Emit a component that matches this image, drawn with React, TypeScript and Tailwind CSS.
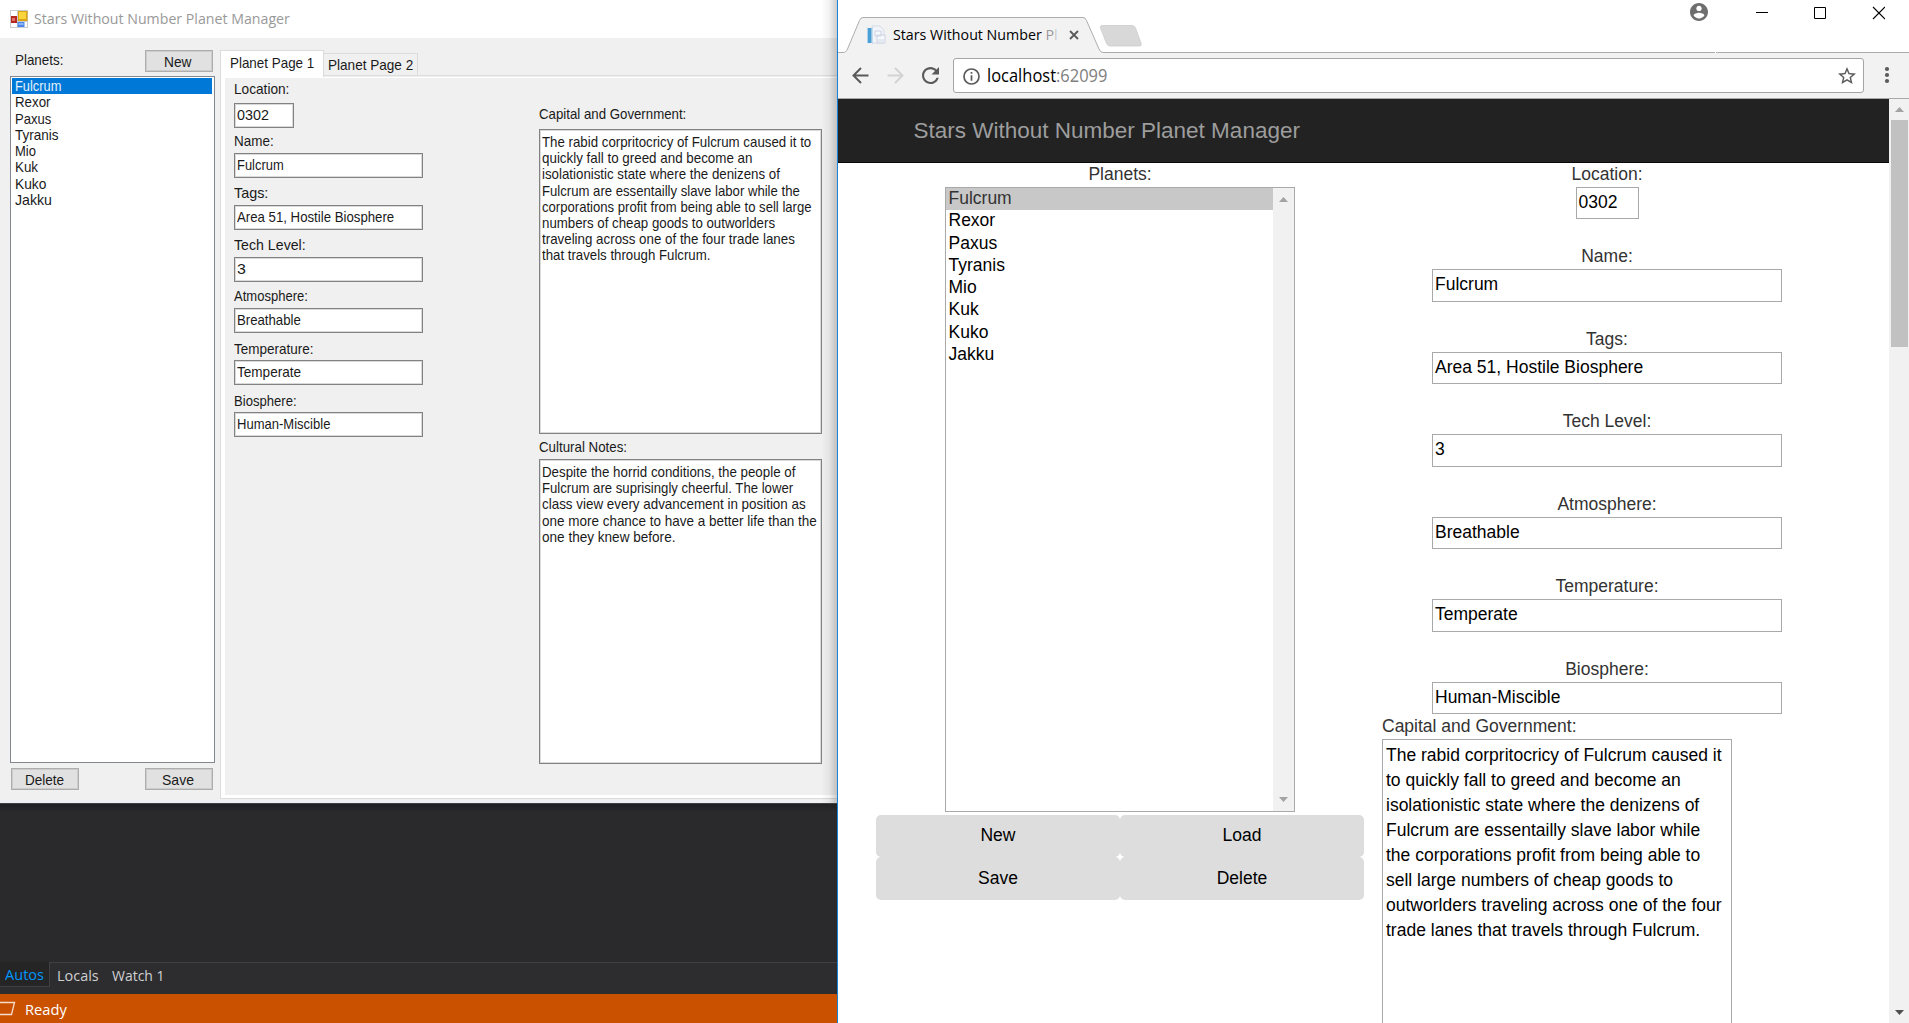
import React, { useLayoutEffect, useRef, useState } from "react";

type Line = [text: string, width: number];

/* Condenses or widens a line of text to a given width. */
function Fit({ w, children, className = "" }: { w: number; children: React.ReactNode; className?: string }) {
  const ref = useRef<HTMLSpanElement>(null);
  const [scale, setScale] = useState(1);
  useLayoutEffect(() => {
    if (ref.current) setScale((w + 1.5) / ref.current.offsetWidth);
  }, [w]);
  return (
    <span className={"inline-block whitespace-nowrap " + className} style={{ width: w + 1.5 }}>
      <span ref={ref} className="inline-block origin-left" style={{ transform: `scaleX(${scale})` }}>
        {children}
      </span>
    </span>
  );
}

const planets: Line[] = [
  ["Fulcrum", 44.7],
  ["Rexor", 34],
  ["Paxus", 35],
  ["Tyranis", 41.7],
  ["Mio", 19.3],
  ["Kuk", 21.7],
  ["Kuko", 29.7],
  ["Jakku", 35.3],
];

const desktopFields = [
  { label: ["Location:", 54], value: ["0302", 30], row: "pt-[4px]", w: "w-[60px]", lead: "leading-[13px]" },
  { label: ["Name:", 38], value: ["Fulcrum", 45], row: "pt-[4px]", w: "w-[189px]", lead: "leading-[18px]" },
  { label: ["Tags:", 33], value: ["Area 51, Hostile Biosphere", 155.3], row: "pt-[6px]", w: "w-[189px]", lead: "leading-[18px]" },
  { label: ["Tech Level:", 70.3], value: ["3", 7], row: "pt-[6px]", w: "w-[189px]", lead: "leading-[18px]" },
  { label: ["Atmosphere:", 72.3], value: ["Breathable", 62.7], row: "pt-[5px]", w: "w-[189px]", lead: "leading-[18px]" },
  { label: ["Temperature:", 77.7], value: ["Temperate", 62.7], row: "pt-[6px]", w: "w-[189px]", lead: "leading-[19px]" },
  { label: ["Biosphere:", 61.3], value: ["Human-Miscible", 92.3], row: "pt-[6px]", w: "w-[189px]", lead: "leading-[19px]" },
] as { label: Line; value: Line; row: string; w: string; lead: string }[];

const capitalLines: Line[] = [
  ["The rabid corpritocricy of Fulcrum caused it to", 267.5],
  ["quickly fall to greed and become an", 209],
  ["isolationistic state where the denizens of", 236],
  ["Fulcrum are essentailly slave labor while the", 256],
  ["corporations profit from being able to sell large", 268.5],
  ["numbers of cheap goods to outworlders", 232],
  ["traveling across one of the four trade lanes", 251],
  ["that travels through Fulcrum.", 167],
];

const cultureLines: Line[] = [
  ["Despite the horrid conditions, the people of", 251.7],
  ["Fulcrum are suprisingly cheerful. The lower", 250],
  ["class view every advancement in position as", 262],
  ["one more chance to have a better life than the", 273.3],
  ["one they knew before.", 132.3],
];

const webFields = [
  { label: "Location:", value: "0302", w: "w-[63px]" },
  { label: "Name:", value: "Fulcrum", w: "w-[350px]" },
  { label: "Tags:", value: "Area 51, Hostile Biosphere", w: "w-[350px]" },
  { label: "Tech Level:", value: "3", w: "w-[350px]" },
  { label: "Atmosphere:", value: "Breathable", w: "w-[350px]" },
  { label: "Temperature:", value: "Temperate", w: "w-[350px]" },
  { label: "Biosphere:", value: "Human-Miscible", w: "w-[350px]" },
];

const webLines = [
  "The rabid corpritocricy of Fulcrum caused it",
  "to quickly fall to greed and become an",
  "isolationistic state where the denizens of",
  "Fulcrum are essentailly slave labor while",
  "the corporations profit from being able to",
  "sell large numbers of cheap goods to",
  "outworlders traveling across one of the four",
  "trade lanes that travels through Fulcrum.",
];

function FormIcon() {
  return (
    <svg width="18" height="18" viewBox="0 0 18 18" className="shrink-0">
      <rect width="18" height="18" fill="#c9cbcf" />
      <rect x="1" y="1" width="6" height="5" fill="#fff" />
      <rect x="1" y="13" width="6" height="4" fill="#fff" />
      <rect x="14" y="12" width="3" height="5" fill="#fff" />
      <rect x="1" y="6" width="6" height="7" fill="#b5281f" />
      <rect x="2" y="8" width="3" height="3" fill="#e4716b" />
      <rect x="8" y="1" width="9.5" height="10" fill="#d9a514" />
      <rect x="9" y="2" width="7" height="7" fill="#fbd53b" />
      <rect x="7.5" y="12" width="7" height="5" fill="#4b86e8" />
      <rect x="8.5" y="13" width="5" height="2" fill="#8db4f5" />
    </svg>
  );
}

function WinButton({ text, w }: { text: string; w: number }) {
  return (
    <button className="h-[22px] w-[68px] border border-[#adadad] bg-[#e1e1e1] pr-[2px] text-center leading-[21px] outline outline-1 -outline-offset-2 outline-[#adadad]/40">
      <Fit w={w} className="text-left">{text}</Fit>
    </button>
  );
}

function LinesBox({ lines }: { lines: Line[] }) {
  return (
    <div className="h-[305px] w-[283px] border border-[#828282] bg-white pl-[1.5px] pt-[4px] leading-[16.25px] outline outline-1 -outline-offset-2 outline-[#828282]/30">
      {lines.map(([l, w]) => (
        <div key={l} className="h-[16.2px]"><Fit w={w}>{l}</Fit></div>
      ))}
    </div>
  );
}

function DesktopApp() {
  return (
    <section className="relative flex h-[803px] flex-col bg-[#f0f0f0] font-['Liberation_Sans',sans-serif] text-[15px] text-[#1a1a1a]">
      <div className="flex h-[38px] shrink-0 items-center bg-white pl-[10px]">
        <FormIcon />
        <Fit w={254.5} className="-mt-[2px] ml-[5.5px] font-['Open_Sans',sans-serif] text-[15px] text-[#999]">
          Stars Without Number Planet Manager
        </Fit>
      </div>
      <div className="flex">
        <div className="w-[220px] shrink-0 pl-[10px]">
          <div className="flex h-[38px] pt-[12px]">
            <span className="w-[135px] pl-[5px] leading-[20px]"><Fit w={46.7}>Planets:</Fit></span>
            <WinButton text="New" w={26} />
          </div>
          <div className="h-[687px] w-[205px] border border-[#828790] bg-white p-px">
            {planets.map(([p, w], i) => (
              <div
                key={p}
                className={
                  "mr-px h-[16.25px] whitespace-nowrap pl-[3px] leading-[16.8px] " +
                  (i === 0 ? "bg-[#0078d7] text-white/90" : "")
                }
              >
                <Fit w={w}>{p}</Fit>
              </div>
            ))}
          </div>
          <div className="flex w-[203px] justify-between pl-px pt-[5px]">
            <WinButton text="Delete" w={37.3} />
            <WinButton text="Save" w={30.3} />
          </div>
        </div>
        <div className="flex w-[617px] flex-col pt-[12px]">
          <div className="flex h-[27px] items-end">
            <div className="z-10 h-[27px] w-[104px] border border-b-0 border-[#dcdcdc] bg-white pl-[9px] leading-[23px]">
              <Fit w={82.5}>Planet Page 1</Fit>
            </div>
            <div className="mb-px h-[23px] w-[94px] border border-l-0 border-[#dcdcdc] pl-[4px] leading-[21px]">
              <Fit w={83.5}>Planet Page 2</Fit>
            </div>
            <div className="mb-px h-px flex-1 bg-[#dcdcdc]" />
          </div>
          <div className="flex h-[722px] border-b border-l border-[#dcdcdc]">
            <div className="flex flex-1 border-b-[3px] border-l-[4px] border-t border-white">
              <div className="w-[314px] shrink-0 pl-[9px]">
                {desktopFields.map((f) => (
                  <div key={f.label[0]} className={f.row}>
                    <div className={"h-[21px] " + f.lead}><Fit w={f.label[1]}>{f.label[0]}</Fit></div>
                    <div className={"h-[25px] border border-[#828282] bg-white pl-[2px] leading-[22.5px] outline outline-1 -outline-offset-2 outline-[#828282]/30 " + f.w}>
                      <Fit w={f.value[1]}>{f.value[0]}</Fit>
                    </div>
                  </div>
                ))}
              </div>
              <div className="w-[290px] pt-[25px]">
                <div className="h-[26px] leading-[22px]"><Fit w={146}>Capital and Government:</Fit></div>
                <LinesBox lines={capitalLines} />
                <div className="h-[25px] leading-[25px]"><Fit w={86.3}>Cultural Notes:</Fit></div>
                <LinesBox lines={cultureLines} />
              </div>
            </div>
          </div>
        </div>
      </div>
      <div className="absolute inset-y-0 right-0 z-20 w-[16px] bg-gradient-to-r from-transparent via-black/5 to-black/20" />
    </section>
  );
}

function DebuggerStrip() {
  return (
    <section className="flex flex-1 flex-col bg-[#2a2a2c] font-['Open_Sans',sans-serif] text-[14.5px]">
      <div className="h-[159px] border-t border-[#3f3f46] bg-gradient-to-b from-[#202021] to-[#2a2a2c] to-[8px]" />
      <div className="flex h-[32px] bg-[#2d2d30] text-[#d0d0d0]">
        <div className="h-[25px] w-[50px] border-b border-r border-[#3f3f46] bg-[#252526] pl-[5px] leading-[25px] text-[#0097fb]">
          <Fit w={37.7}>Autos</Fit>
        </div>
        <div className="flex flex-1 border-t border-[#3f3f46] pl-[6.5px] leading-[25px]">
          <Fit w={40.3} className="mr-[14px]">Locals</Fit>
          <Fit w={51.5}>Watch 1</Fit>
        </div>
      </div>
      <div className="flex h-[29px] items-center bg-[#ca5100] text-white">
        <svg width="16" height="15" viewBox="0 0 16 15" className="mr-[9px]">
          <path d="M0 1.5H14.5L11.5 13.5H0" fill="none" stroke="#f5dccb" strokeWidth="1.3" />
        </svg>
        <Fit w={40} className="mt-px leading-[31px]">Ready</Fit>
      </div>
    </section>
  );
}

function TabStrip() {
  return (
    <div className="relative flex h-[53px] bg-white">
      <svg width="1071" height="53" viewBox="0 0 1071 53" className="absolute inset-0">
        <path d="M0 52.5H5C7.5 52.5 8.5 51 9.5 49L21.5 20.5Q22.5 17.5 25 17.5H245Q247.5 17.5 248.5 20.5L261 49Q262.5 52.5 265 52.5V54H0Z" fill="#f2f2f2" />
        <path d="M0 52.5H5C7.5 52.5 8.5 51 9.5 49L21.5 20.5Q22.5 17.5 25 17.5H245Q247.5 17.5 248.5 20.5L261 49Q262.5 52.5 265 52.5H877M878 52.5H1071" fill="none" stroke="#adadad" />
        <path d="M264 25.5H294Q296.5 25.5 297.5 28L303 43Q304 46 301.5 46H272Q269.5 46 268.5 43.5L262.5 28Q262 25.5 264 25.5Z" fill="#d8d8d8" stroke="#cdcdcd" strokeWidth=".8" />
      </svg>
      <div className="relative mt-[25px] flex h-[20px] items-center pl-[29px]">
        <svg width="19" height="20" viewBox="0 0 19 20">
          <path d="M5 1H13L17 5V18H5Z" fill="#f1f4f9" stroke="#d5dbe5" />
          <rect x="0.5" y="3" width="4" height="15" fill="#4a9fd6" />
          <path d="M0 2V19M5.5 2V19" stroke="#c5dbee" />
          <path d="M8 6H14V11H8ZM10 10H18V18H10Z" fill="#f7f9fc" stroke="#cbd2e2" />
          <path d="M11 14H17V17H11Z" fill="#e4e8f1" />
        </svg>
        <Fit w={163.5} className="-mt-[2px] ml-[7px] font-['Open_Sans',sans-serif] text-[15px] leading-[20px] text-black">
          Stars Without Number <span className="text-black/40">P</span><span className="text-black/20">l</span>
        </Fit>
        <svg width="10" height="10" viewBox="0 0 10 10" className="ml-[11px]">
          <path d="M1 1L9 9M9 1L1 9" stroke="#5a5a5a" strokeWidth="1.8" />
        </svg>
      </div>
      <div className="relative ml-auto mr-[24px] flex h-[24px] items-center">
        <svg width="18" height="18" viewBox="2 2 20 20" className="mr-[48px]">
          <path fill="#6e6e6e" d="M12 2C6.480 2 2 6.480 2 12s4.480 10 10 10 10-4.480 10-10S17.520 2 12 2zm0 3c1.660 0 3 1.340 3 3s-1.340 3-3 3-3-1.340-3-3 1.340-3 3-3zm0 14.200c-2.500 0-4.710-1.280-6-3.220.030-1.990 4-3.080 6-3.080 1.990 0 5.970 1.090 6 3.080-1.290 1.940-3.500 3.220-6 3.220z" />
        </svg>
        <svg width="129" height="14" viewBox="0 0 129 14" className="mt-[2px]">
          <path d="M0 6.5H12M58.5 1.5H69.5V12.5H58.5Z" fill="none" stroke="#000" />
          <path d="M117 1L129 13M129 1L117 13" stroke="#000" strokeWidth="1.1" />
        </svg>
      </div>
    </div>
  );
}

function Toolbar() {
  return (
    <div className="flex h-[46px] border-b border-[#a9a9a9] bg-[#f2f2f2]">
      <div className="flex h-[44px] w-[115px] items-center pl-[14px]">
        <svg width="17" height="17" viewBox="0 0 17 17">
          <path d="M16.5 8.5H2M9 1L1.5 8.5L9 16" fill="none" stroke="#5a5a5a" strokeWidth="2" />
        </svg>
        <svg width="17" height="17" viewBox="0 0 17 17" className="ml-[18px]">
          <path d="M0.5 8.5H15M8 1L15.5 8.5L8 16" fill="none" stroke="#d3d3d3" strokeWidth="2" />
        </svg>
        <svg width="17" height="17" viewBox="4 4 16 16" className="ml-[18px]">
          <path fill="#5a5a5a" d="M17.650 6.350C16.200 4.900 14.210 4 12 4c-4.420 0-7.990 3.580-7.990 8s3.570 8 7.990 8c3.730 0 6.840-2.550 7.730-6h-2.080c-.820 2.330-3.040 4-5.650 4-3.310 0-6-2.690-6-6s2.690-6 6-6c1.660 0 3.140.690 4.220 1.780L13 11h7V4l-2.350 2.350z" />
        </svg>
      </div>
      <div className="mt-[5px] flex h-[35px] w-[911px] items-center rounded-[3px] border border-[#a5a5a5] bg-white pl-[9px] pr-[7px]">
        <svg width="17" height="17" viewBox="0 0 17 17" className="mt-[2px]">
          <circle cx="8.5" cy="8.5" r="7.5" fill="none" stroke="#5a5a5a" strokeWidth="1.7" />
          <path d="M8.5 4V5.8M8.5 7.3V12.7" stroke="#5a5a5a" strokeWidth="1.7" />
        </svg>
        <Fit w={119} className="ml-[6.5px] font-['Open_Sans',sans-serif] text-[17.5px] leading-[33px] text-black">
          localhost<span className="text-[#808080]">:62099</span>
        </Fit>
        <svg width="18" height="18" viewBox="2 2 20 20" className="ml-auto mt-[1px]">
          <path fill="#5a5a5a" d="M22 9.240l-7.190-.620L12 2 9.190 8.630 2 9.240l5.460 4.730L5.820 21 12 17.270 18.180 21l-1.630-7.030L22 9.240zM12 15.400l-3.760 2.270 1-4.280-3.320-2.880 4.380-.380L12 6.100l1.710 4.040 4.380.380-3.320 2.880 1 4.280L12 15.400z" />
        </svg>
      </div>
      <svg width="6" height="18" viewBox="0 0 6 18" className="ml-[20px] mt-[13px]">
        <circle cx="3" cy="3" r="2.1" fill="#5a5a5a" />
        <circle cx="3" cy="9" r="2.1" fill="#5a5a5a" />
        <circle cx="3" cy="15" r="2.1" fill="#5a5a5a" />
      </svg>
    </div>
  );
}

function Arrow({ down, dark }: { down?: boolean; dark?: boolean }) {
  return (
    <svg width="9" height="5" viewBox="0 0 9 5">
      <path d={down ? "M0 0H9L4.5 5Z" : "M0 5H9L4.5 0Z"} fill={dark ? "#505050" : "#a3a3a3"} />
    </svg>
  );
}

function PageButton({ children, low }: { children: React.ReactNode; low?: boolean }) {
  return (
    <button className={"rounded-[5px] bg-[#ddd] text-center text-black " + (low ? "pb-[1px]" : "pb-[2px]")}>
      {children}
    </button>
  );
}

function WebPage() {
  return (
    <div className="h-[924px] w-[1051px] overflow-hidden bg-white font-['Liberation_Sans',sans-serif] text-[17.5px] leading-[25px] text-[#333]">
      <div className="h-[64px] border-b border-[#080808] bg-[#222] pl-[75.5px] text-[22.5px] leading-[63px] text-[#9d9d9d]">
        Stars Without Number Planet Manager
      </div>
      <div className="flex">
        <div className="ml-[38px] flex w-[488px] shrink-0 flex-col items-center">
          <div className="h-[24px] leading-[23px]">Planets:</div>
          <div className="flex h-[625px] w-[350px] border border-[#a9a9a9] bg-white">
            <div className="flex-1 text-black">
              {planets.map(([p], i) => (
                <div key={p} className={"h-[22.25px] pl-[2.5px] leading-[21px] " + (i === 0 ? "bg-[#c8c8c8] text-[#333]" : "")}>
                  {p}
                </div>
              ))}
            </div>
            <div className="flex w-[21px] flex-col items-center justify-between bg-[#f1f1f1] py-[9px]">
              <Arrow />
              <Arrow down />
            </div>
          </div>
          <div className="mt-[3px] grid w-full grid-cols-2 grid-rows-[42px_43px]">
            <PageButton>New</PageButton>
            <PageButton>Load</PageButton>
            <PageButton low>Save</PageButton>
            <PageButton low>Delete</PageButton>
          </div>
        </div>
        <div className="ml-[18px] w-[450px]">
          <div className="-mt-[0.2px] flex flex-col items-center gap-[26px]">
            {webFields.map((f) => (
              <div key={f.label} className="flex h-[56.5px] flex-col items-center">
                <div className="h-[24px] leading-[23px]">{f.label}</div>
                <div className={"h-[32.5px] whitespace-nowrap border border-[#a9a9a9] bg-white pl-[2px] leading-[28.7px] text-black " + f.w}>{f.value}</div>
              </div>
            ))}
          </div>
          <div className="h-[25px] leading-[24px]">Capital and Government:</div>
          <div className="h-[400px] w-[350px] border border-[#a9a9a9] bg-white pl-[3px] pt-[3px] text-black">
            {webLines.map((l) => (
              <div key={l} className="whitespace-nowrap">{l}</div>
            ))}
          </div>
        </div>
      </div>
    </div>
  );
}

export default function App() {
  return (
    <main className="flex h-[1023px] w-[1909px] overflow-hidden bg-white">
      <div className="flex w-[837px] shrink-0 flex-col">
        <DesktopApp />
        <DebuggerStrip />
      </div>
      <div className="w-px shrink-0 bg-[#1883d7]" />
      <div className="flex w-[1071px] shrink-0 flex-col">
        <TabStrip />
        <Toolbar />
        <div className="flex">
          <WebPage />
          <div className="flex h-[924px] w-[20px] flex-col items-center bg-[#f1f1f1]">
            <div className="flex h-[21px] items-center"><Arrow /></div>
            <div className="h-[227px] w-[17px] bg-[#c1c1c1]" />
            <div className="mb-[8px] mt-auto"><Arrow down dark /></div>
          </div>
        </div>
      </div>
    </main>
  );
}
